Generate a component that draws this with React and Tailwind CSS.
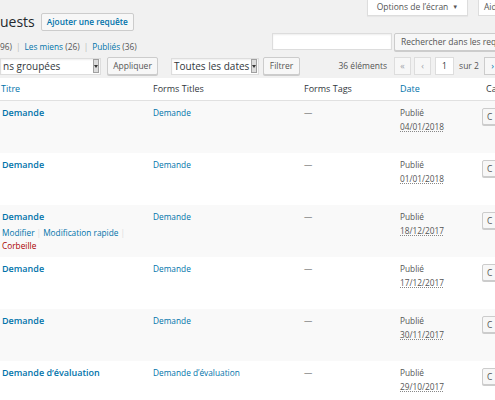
import React from "react";

const rows = [
  { title: "Demande", form: "Demande", date: "04/01/2018" },
  { title: "Demande", form: "Demande", date: "01/01/2018" },
  { title: "Demande", form: "Demande", date: "18/12/2017", actions: true },
  { title: "Demande", form: "Demande", date: "17/12/2017" },
  { title: "Demande", form: "Demande", date: "30/11/2017" },
  { title: "Demande d’évaluation", form: "Demande d’évaluation", date: "29/10/2017" },
];

function SelectBox({ label, width }) {
  return (
    <div className={`${width} h-[17px] shrink-0 bg-white border border-[#ddd] flex items-center justify-between pl-[2px] pr-[1px] shadow-[inset_0_1px_2px_rgba(0,0,0,0.07)]`}>
      <span className="text-[10px] text-[#32373c] whitespace-nowrap">{label}</span>
      <span className="w-[6px] h-[14px] bg-[#dcdcdc] border border-[#a0a0a0] flex items-center justify-center">
        <span className="border-l-[2px] border-r-[2px] border-t-[3px] border-l-transparent border-r-transparent border-t-[#333]" />
      </span>
    </div>
  );
}

function Btn({ children, className = "" }) {
  return (
    <div className={`h-[18px] shrink-0 bg-[#f7f7f7] border border-[#ccc] rounded-[2px] flex items-center justify-center text-[8.5px] text-[#555] whitespace-nowrap shadow-[0_1px_0_#ccc] ${className}`}>
      {children}
    </div>
  );
}

export default function App() {
  return (
    <div className="w-[495px] h-[400px] overflow-hidden bg-[#f1f1f1] font-['Open_Sans',sans-serif] text-[#444]">
      {/* screen meta tabs */}
      <div className="h-[13px] flex items-start pl-[367px] gap-[10px]">
        <div className="w-[101px] h-[16px] shrink-0 bg-white border border-t-0 border-[#ddd] flex items-center justify-center gap-[4px] text-[8.5px] text-[#555] shadow-[0_1px_1px_rgba(0,0,0,0.04)]">
          Options de l’écran <span className="text-[6px]">▼</span>
        </div>
        <div className="w-[40px] h-[16px] shrink-0 bg-white border border-t-0 border-[#ddd] flex items-center pl-[5px] text-[8.5px] text-[#555]">
          Aide
        </div>
      </div>

      {/* title */}
      <div className="h-[18px] flex items-center gap-[6px]">
        <h1 className="text-[14px] leading-[18px] text-[#23282d]">uests</h1>
        <div className="h-[18px] px-[5px] bg-[#f7f7f7] border border-[#ccc] rounded-[2px] flex items-center text-[8.3px] font-semibold text-[#0073aa]">
          Ajouter une requête
        </div>
      </div>

      {/* subsubsub + search */}
      <div className="mt-[2px] h-[18px] flex items-start">
        <div className="w-[272px] shrink-0 pt-[8px] text-[8.3px] leading-[12px] flex gap-[4px] whitespace-nowrap">
          <span className="text-[#555]">96)</span>
          <span className="text-[#bbb]">|</span>
          <span className="text-[#0073aa]">Les miens <span className="text-[#555]">(26)</span></span>
          <span className="text-[#bbb]">|</span>
          <span className="text-[#0073aa]">Publiés <span className="text-[#555]">(36)</span></span>
        </div>
        <div className="w-[120px] h-[17px] shrink-0 bg-white border border-[#ddd] shadow-[inset_0_1px_2px_rgba(0,0,0,0.07)]" />
        <Btn className="ml-[2px] px-[6px] justify-start">Rechercher dans les requêtes</Btn>
      </div>

      {/* bulk actions / pagination */}
      <div className="mt-[6px] h-[18px] flex items-center">
        <SelectBox label="ns groupées" width="w-[101px]" />
        <Btn className="ml-[6px] w-[51px]">Appliquer</Btn>
        <SelectBox label="Toutes les dates" width="w-[88px] ml-[13px]" />
        <Btn className="ml-[4px] w-[37px]">Filtrer</Btn>
        <div className="w-[87px] shrink-0 text-right text-[8.5px] text-[#555]">36 éléments</div>
        <div className="ml-[7px] w-[17px] h-[18px] shrink-0 bg-[#f7f7f7] border border-[#ddd] flex items-center justify-center text-[9px] text-[#a0a5aa]">«</div>
        <div className="ml-[3px] w-[17px] h-[18px] shrink-0 bg-[#f7f7f7] border border-[#ddd] flex items-center justify-center text-[9px] text-[#a0a5aa]">‹</div>
        <div className="ml-[4px] w-[19px] h-[18px] shrink-0 bg-white border border-[#ddd] flex items-center justify-center text-[8.5px] text-[#32373c]">1</div>
        <div className="ml-[4px] w-[22px] shrink-0 text-center text-[8.5px] text-[#555] whitespace-nowrap">sur 2</div>
        <div className="ml-[4px] w-[17px] h-[18px] shrink-0 bg-[#f7f7f7] border border-[#ccc] flex items-center justify-center text-[9px] text-[#0073aa]">›</div>
      </div>

      {/* table */}
      <div className="mt-[3px] bg-white w-[700px]">
        <div className="h-[23px] grid grid-cols-[153px_151px_95px_83px_200px] items-center border-b border-[#e1e1e1] text-[9px]">
          <div className="pl-[1px] text-[#0073aa]">Titre</div>
          <div className="text-[#32373c]">Forms Titles</div>
          <div className="text-[#32373c]">Forms Tags</div>
          <div className="pl-[1px] text-[#0073aa]">Date</div>
          <div className="pl-[4px] text-[#32373c]">Catégories</div>
        </div>
        {rows.map((r, i) => (
          <div
            key={i}
            className={`h-[52px] grid grid-cols-[153px_151px_95px_83px_200px] items-start text-[8.3px] leading-[14px] ${i % 2 === 0 ? "bg-[#f9f9f9]" : "bg-white"}`}
          >
            <div className="pl-[2px] pt-[5px]">
              <div className="text-[9px] font-semibold text-[#0073aa]">{r.title}</div>
              {r.actions && (
                <div className="mt-[2px] leading-[13px]">
                  <span className="text-[#0073aa]">Modifier</span>
                  <span className="text-[#ddd] mx-[2px]">|</span>
                  <span className="text-[#0073aa]">Modification rapide</span>
                  <span className="text-[#ddd] ml-[2px]">|</span>
                  <div className="text-[#a00]">Corbeille</div>
                </div>
              )}
            </div>
            <div className="pt-[5px] text-[#0073aa]">{r.form}</div>
            <div className="pt-[5px] text-[#777]">—</div>
            <div className="pl-[1px] pt-[5px] text-[#555]">
              <div>Publié</div>
              <div className="underline decoration-dotted decoration-[#888] underline-offset-1">{r.date}</div>
            </div>
            <div className="pt-[7px]">
              <div className="w-[50px] h-[17px] bg-[#f7f7f7] border border-[#ccc] rounded-[2px] flex items-center pl-[4px] text-[8.5px] text-[#555] shadow-[0_1px_0_#ccc]">
                C
              </div>
            </div>
          </div>
        ))}
      </div>
    </div>
  );
}
